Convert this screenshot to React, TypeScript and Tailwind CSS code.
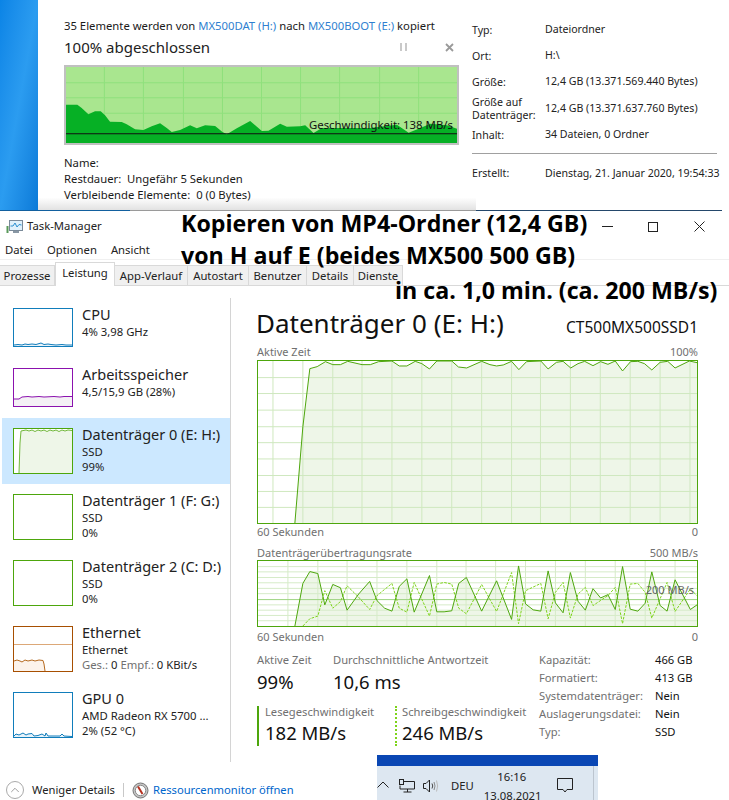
import { ChevronUp } from "lucide-react";

type Pt = [number, number];

const pts = (list: Pt[]) => list.map((p) => p.join(",")).join(" ");

// Points below are read off the screenshot at 3x, so the viewBoxes are in 3x units too
const ACTIVE_LINE: Pt[] = [
  [148, 670], [172, 380], [193, 205], [215, 199], [240, 184], [262, 193], [285, 193], [307, 183], [350, 193], [375, 193],
  [400, 184], [440, 182], [462, 197], [485, 197], [510, 183], [530, 190], [553, 206], [575, 182], [620, 182], [640, 200],
  [665, 203], [710, 183], [735, 193], [755, 197], [775, 194], [800, 183], [822, 208], [845, 184], [888, 182], [910, 206],
  [935, 186], [955, 183], [978, 203], [1000, 190], [1020, 183], [1045, 196], [1068, 184], [1090, 192], [1112, 182], [1134, 212],
  [1158, 184], [1180, 183], [1200, 190], [1222, 209], [1247, 186], [1270, 183], [1292, 203], [1335, 182], [1358, 187],
];

const READ_LINE: Pt[] = [
  [148, 262], [172, 133], [193, 97], [217, 103], [238, 198], [262, 136], [285, 146], [305, 214], [340, 165], [373, 127],
  [395, 185], [418, 208], [440, 217], [462, 142], [485, 119], [507, 220], [553, 109], [575, 219], [597, 219], [620, 216],
  [641, 133], [664, 115], [710, 217], [755, 125], [800, 242], [821, 80], [842, 195], [865, 213], [888, 217], [910, 95],
  [932, 192], [955, 222], [977, 100], [1000, 187], [1022, 214], [1045, 149], [1068, 177], [1090, 167], [1112, 212], [1134, 82],
  [1157, 211], [1180, 217], [1202, 193], [1222, 98], [1247, 200], [1268, 217], [1292, 122], [1338, 212], [1358, 198],
];

const WRITE_LINE: Pt[] = [
  [172, 262], [193, 240], [217, 232], [238, 155], [262, 208], [285, 188], [305, 140], [340, 175], [373, 212], [395, 170],
  [440, 133], [462, 208], [485, 220], [507, 130], [553, 232], [575, 135], [597, 130], [620, 135], [641, 208], [664, 225],
  [710, 136], [755, 218], [800, 100], [821, 255], [842, 155], [888, 133], [910, 240], [932, 160], [955, 130], [977, 238],
  [1000, 165], [1022, 145], [1045, 200], [1090, 170], [1112, 145], [1134, 255], [1157, 135], [1180, 133], [1202, 160], [1222, 238],
  [1268, 130], [1292, 218], [1338, 150], [1358, 170],
];

const COPY_AREA: Pt[] = [
  [18, 133], [52, 133], [65, 143], [85, 162], [105, 153], [122, 153], [135, 165], [150, 184], [185, 185], [200, 192],
  [225, 207], [250, 209], [275, 198], [300, 189], [320, 203], [335, 215], [360, 209], [390, 195], [410, 204], [435, 195],
  [465, 197], [487, 215], [500, 222], [530, 204], [570, 182], [605, 212], [625, 211], [660, 190], [680, 199], [720, 198],
  [735, 195], [760, 218], [785, 203], [850, 203], [930, 203], [1010, 193], [1045, 217], [1075, 205], [1110, 190], [1160, 195],
  [1190, 205], [1190, 248], [18, 248],
];

function CopyChart() {
  return (
    <div className="relative w-[395px] h-[80px] border-2 border-[#c0c0c0] bg-[#a9e68f]">
      <svg viewBox="18 20 1172 228" preserveAspectRatio="none" className="block w-full h-full">
        {[133, 250, 370, 487, 604, 721, 838, 958, 1075].map((x) => (
          <line key={x} x1={x} x2={x} y1={20} y2={248} stroke="#8fe07c" strokeWidth={3} />
        ))}
        {[67, 112, 159].map((y) => (
          <line key={y} x1={18} x2={1190} y1={y} y2={y} stroke="#8fe07c" strokeWidth={3} />
        ))}
        <polygon points={pts(COPY_AREA)} fill="#06b025" />
        <line x1={18} x2={1190} y1={220} y2={220} stroke="#101010" strokeWidth={3} />
      </svg>
      <span className="absolute right-[4px] top-[50px] text-[11.4px] leading-[16px] text-[#111] whitespace-nowrap">
        Geschwindigkeit: 138 MB/s
      </span>
    </div>
  );
}

function CopyDialog() {
  return (
    <div className="w-[438px] h-[210px] pl-[26px] pt-[17px] bg-gradient-to-b from-white from-[94%] to-[#e2e2e2] text-[11.3px] text-[#1a1a1a]">
      <p className="leading-[18px] whitespace-nowrap">
        35 Elemente werden von <span className="text-[#2f7fd0]">MX500DAT (H:)</span> nach{" "}
        <span className="text-[#2f7fd0]">MX500BOOT (E:)</span> kopiert
      </p>
      <div className="flex items-center justify-between w-[393px] h-[24px] mb-[6px]">
        <span className="text-[15px] text-[#222]">100% abgeschlossen</span>
        <div className="flex items-center gap-[38px] pr-[3px]">
          <div className="flex gap-[3px]">
            <span className="w-[2px] h-[8px] bg-[#c9c9c9]" />
            <span className="w-[2px] h-[8px] bg-[#c9c9c9]" />
          </div>
          <svg width="9" height="9" viewBox="0 0 9 9">
            <path d="M1 1 L8 8 M8 1 L1 8" stroke="#9a9a9a" strokeWidth="1.8" />
          </svg>
        </div>
      </div>
      <CopyChart />
      <div className="mt-[10px] leading-[16px]">
        <p>Name:</p>
        <p>Restdauer:&nbsp; Ungefähr 5 Sekunden</p>
        <p>Verbleibende Elemente:&nbsp; 0 (0 Bytes)</p>
      </div>
    </div>
  );
}

const PROPS: { label: string[]; value: string; h: string }[] = [
  { label: ["Typ:"], value: "Dateiordner", h: "h-[26px]" },
  { label: ["Ort:"], value: "H:\\", h: "h-[26px]" },
  { label: ["Größe:"], value: "12,4 GB (13.371.569.440 Bytes)", h: "h-[26px]" },
  { label: ["Größe auf", "Datenträger:"], value: "12,4 GB (13.371.637.760 Bytes)", h: "h-[27px]" },
  { label: ["Inhalt:"], value: "34 Dateien, 0 Ordner", h: "h-[26px]" },
];

function PropertiesPanel() {
  return (
    <div className="flex-1 pt-[17px] text-[10.6px] text-[#222]">
      <div className="ml-[-4px] w-[245px]">
        {PROPS.map((p) => (
          <div key={p.value} className={`flex items-center ${p.h}`}>
            <span className="w-[73px] shrink-0 leading-[13px]">
              {p.label.map((l) => (
                <span key={l} className="block">{l}</span>
              ))}
            </span>
            <span className="whitespace-nowrap">{p.value}</span>
          </div>
        ))}
        <div className="h-[1px] bg-[#a0a0a0] mt-[5px]" />
        <div className="flex items-center h-[39px]">
          <span className="w-[73px] shrink-0">Erstellt:</span>
          <span className="whitespace-nowrap">Dienstag, 21. Januar 2020, 19:54:33</span>
        </div>
      </div>
    </div>
  );
}

function TaskIcon() {
  return (
    <svg width="17" height="14" viewBox="0 0 17 14">
      <rect x="0.5" y="6" width="2" height="7" fill="#5a9a5a" />
      <rect x="3.5" y="0.5" width="13" height="10" fill="#dff0fb" stroke="#7a8a99" />
      <path d="M4.5 6 L7 6 L9 3 L11 7 L13 4.5 L15.5 5" fill="none" stroke="#2a8fd0" strokeWidth="1" />
      <rect x="7" y="11" width="6" height="2" fill="#8a98a5" />
    </svg>
  );
}

function TitleBar() {
  return (
    <div className="flex items-center h-[31px] pl-[6px]">
      <TaskIcon />
      <span className="ml-[4px] text-[11.3px] text-[#222]">Task-Manager</span>
      <div className="ml-auto flex items-center pr-[24px]">
        <span className="w-[11px] h-[1px] bg-[#222]" />
        <span className="ml-[35px] w-[10px] h-[10px] border border-[#222]" />
        <svg width="11" height="11" viewBox="0 0 11 11" className="ml-[36px]">
          <path d="M0.5 0.5 L10.5 10.5 M10.5 0.5 L0.5 10.5" stroke="#222" strokeWidth="1" />
        </svg>
      </div>
    </div>
  );
}

const TABS = [
  { name: "Prozesse", w: "w-[56px]" },
  { name: "Leistung", w: "w-[60px]", active: true },
  { name: "App-Verlauf", w: "w-[74px]" },
  { name: "Autostart", w: "w-[62px]" },
  { name: "Benutzer", w: "w-[59px]" },
  { name: "Details", w: "w-[48px]" },
  { name: "Dienste", w: "w-[50px]" },
];

function Tabs() {
  return (
    <div className="flex items-end h-[24px] border-b border-[#d9d9d9] text-[11.3px] text-[#222]">
      {TABS.map((t) =>
        t.active ? (
          <div key={t.name} className={`${t.w} h-[24px] mb-[-1px] bg-white border border-b-0 border-[#d9d9d9] text-center leading-[20px]`}>
            {t.name}
          </div>
        ) : (
          <div key={t.name} className={`${t.w} h-[20px] bg-[#f0f0f0] border-l border-t border-r border-[#d9d9d9] text-center leading-[20px] ml-[-1px]`}>
            {t.name}
          </div>
        )
      )}
    </div>
  );
}

function Thumb({ color, h, children }: { color: string; h: string; children?: React.ReactNode }) {
  return (
    <div className={`w-[60px] ${h} border shrink-0 bg-white`} style={{ borderColor: color }}>
      {children}
    </div>
  );
}

type SidebarItem = {
  title: string;
  lines: string[];
  color: string;
  rowH: string;
  boxH: string;
  active?: boolean;
  ethernet?: boolean;
  line?: string;
  close?: string;
  stroke?: string;
  fill?: string;
  vb?: string;
};

const SIDEBAR: SidebarItem[] = [
  {
    title: "CPU", lines: ["4%  3,98 GHz"], color: "#117dbb", rowH: "h-[60px]", boxH: "h-[39px]", vb: "0 0 58 37",
    line: "0,36 4,35.5 8,36 11,35 14,35.5 18,35 22,35.5 27,34 30,35.5 34,35 37,35.5 42,36 48,35.5 52,36 58,36", close: "58,37 0,37",
    stroke: "#117dbb", fill: "#e8f3fa",
  },
  {
    title: "Arbeitsspeicher", lines: ["4,5/15,9 GB (28%)"], color: "#8b12ae", rowH: "h-[60px]", boxH: "h-[39px]", vb: "0 0 58 37",
    line: "0,30 5,30 8,28 14,27.5 18,28 25,27.5 30,28 40,27.5 46,28 50,27.5 58,27.5", close: "58,37 0,37",
    stroke: "#8b12ae", fill: "#f4f0f5",
  },
  {
    title: "Datenträger 0 (E: H:)", lines: ["SSD", "99%"], color: "#4da60c", rowH: "h-[66px]", boxH: "h-[46px]", active: true, vb: "0 0 58 44",
    line: "5,44 6,14 7,2 12,1 15,2 18,1 21,2.5 24,1 27,2 30,1 33,2.5 36,1 39,2 42,1 45,2.5 48,1 51,2 54,1 58,1.5", close: "58,44",
    stroke: "#72b83c", fill: "#eef6e8",
  },
  { title: "Datenträger 1 (F: G:)", lines: ["SSD", "0%"], color: "#4da60c", rowH: "h-[66px]", boxH: "h-[46px]" },
  { title: "Datenträger 2 (C: D:)", lines: ["SSD", "0%"], color: "#4da60c", rowH: "h-[66px]", boxH: "h-[46px]" },
  {
    title: "Ethernet", lines: ["Ethernet"], color: "#a74f01", rowH: "h-[66px]", boxH: "h-[46px]", ethernet: true, vb: "0 0 58 44",
    line: "0,34 3,33 6,34 8,35 11,33 14,34 18,33 21,34 25,33 29,33.5 30,37 31,44", close: "0,44",
    stroke: "#b56a20", fill: "#fcf3eb",
  },
  {
    title: "GPU 0", lines: ["AMD Radeon RX 5700 ...", "2%  (52 °C)"], color: "#117dbb", rowH: "h-[66px]", boxH: "h-[46px]", vb: "0 0 58 44",
    line: "0,43 2,41 5,42 9,40 12,42 14,41 18,40.5 20,43 24,42.5 28,41 31,43 32,40 34,43 46,43 48,41 50,43 58,43.5", close: "58,44 0,44",
    stroke: "#117dbb", fill: "#e8f3fa",
  },
];

function Sidebar() {
  return (
    <div className="w-[231px] shrink-0 pt-[12px]">
      <div className="border-r border-[#d4d4d4] w-[231px] mt-[10px]">
        <div className="mt-[-10px]">
          {SIDEBAR.map((s) => (
            <div
              key={s.title}
              className={`flex ml-[2px] pl-[11px] pt-[10px] ${s.rowH} ${s.active ? "bg-[#cce8ff]" : ""}`}
            >
              <Thumb color={s.color} h={s.boxH}>
                {s.line && (
                  <svg viewBox={s.vb} preserveAspectRatio="none" className="block w-full h-full">
                    <polygon points={`${s.line} ${s.close}`} fill={s.fill} />
                    <polyline points={s.line} fill="none" stroke={s.stroke} strokeWidth="1" />
                    {s.ethernet && <line x1="0" x2="58" y1="17.5" y2="17.5" stroke="#dca878" strokeWidth="1" />}
                  </svg>
                )}
              </Thumb>
              <div className="ml-[9px] mt-[-4px] text-[11.3px] leading-[15px] text-[#222] whitespace-nowrap">
                <div className="text-[14.5px] leading-[20px] text-[#222]">{s.title}</div>
                {s.lines.map((l) => (
                  <div key={l}>{l}</div>
                ))}
                {s.ethernet && (
                  <div>
                    <span className="text-[#707070]">Ges.:</span> 0 <span className="text-[#707070]">Empf.:</span> 0 KBit/s
                  </div>
                )}
              </div>
            </div>
          ))}
        </div>
        <div className="h-[14px]" />
      </div>
    </div>
  );
}

function ActiveChart() {
  const verticals = [82, 172, 262, 350, 440, 530, 620, 710, 800, 887, 977, 1067, 1157, 1247, 1337];
  const horizontals = [232, 280, 330, 380, 428, 477, 527, 575, 623];
  return (
    <svg viewBox="37 182 1321 488" preserveAspectRatio="none" className="block w-[441px] h-[164px] border border-[#4da60c]">
      <polygon points={`${pts(ACTIVE_LINE)} 1358,670`} fill="#eef6e8" />
      {verticals.map((x) => (
        <line key={x} x1={x} x2={x} y1={182} y2={670} stroke="#cfe8bf" strokeWidth={3} />
      ))}
      {horizontals.map((y) => (
        <line key={y} x1={37} x2={1358} y1={y} y2={y} stroke="#cfe8bf" strokeWidth={3} />
      ))}
      <polyline points={pts(ACTIVE_LINE)} fill="none" stroke="#4da60c" strokeWidth={3} />
    </svg>
  );
}

function RateChart() {
  const verticals = [127, 217, 305, 395, 485, 575, 663, 752, 842, 932, 1022, 1112, 1202, 1292];
  const horizontals = [82, 98, 115, 131, 148, 164, 198, 214, 230, 246];
  return (
    <div className="relative w-[441px] h-[67px]">
      <svg viewBox="37 65 1321 197" preserveAspectRatio="none" className="block w-full h-full border border-[#4da60c]">
        <polygon points={`${pts(READ_LINE)} 1358,262`} fill="#eef6e8" />
        {verticals.map((x) => (
          <line key={x} x1={x} x2={x} y1={65} y2={262} stroke="#d6ebc8" strokeWidth={3} />
        ))}
        {horizontals.map((y) => (
          <line key={y} x1={37} x2={1358} y1={y} y2={y} stroke="#d6ebc8" strokeWidth={3} />
        ))}
        <line x1={37} x2={1358} y1={182} y2={182} stroke="#9bd37f" strokeWidth={3} />
        <polyline points={pts(WRITE_LINE)} fill="none" stroke="#7dd31a" strokeWidth={3} strokeDasharray="8 4" />
        <polyline points={pts(READ_LINE)} fill="none" stroke="#4da60c" strokeWidth={3} />
      </svg>
      <span className="absolute right-[4px] top-[23px] text-[11px] leading-[14px] text-[#666]">200 MB/s</span>
    </div>
  );
}

const FACTS = [
  ["Kapazität:", "466 GB"],
  ["Formatiert:", "413 GB"],
  ["Systemdatenträger:", "Nein"],
  ["Auslagerungsdatei:", "Nein"],
  ["Typ:", "SSD"],
];

function ChartLabels({ left, right }: { left: string; right: string }) {
  return (
    <div className="flex justify-between h-[15px] leading-[15px] text-[11px] text-[#707070]">
      <span>{left}</span>
      <span>{right}</span>
    </div>
  );
}

function DetailPanel() {
  return (
    <div className="w-[441px] ml-[26px] text-[#707070]">
      <div className="flex items-baseline justify-between h-[58px] pt-[20px]">
        <span className="text-[26px] leading-[34px] text-[#111] ml-[-1px] whitespace-nowrap">Datenträger 0 (E: H:)</span>
        <span className="text-[15.5px] text-[#111]">CT500MX500SSD1</span>
      </div>
      <ChartLabels left="Aktive Zeit" right="100%" />
      <div className="h-[1px]" />
      <ActiveChart />
      <ChartLabels left="60 Sekunden" right="0" />
      <div className="h-[6px]" />
      <ChartLabels left="Datenträgerübertragungsrate" right="500 MB/s" />
      <RateChart />
      <div className="h-[2px]" />
      <ChartLabels left="60 Sekunden" right="0" />
      <div className="flex mt-[8px]">
        <div className="w-[282px]">
          <div className="flex">
            <div className="w-[76px]">
              <div className="text-[11.2px] leading-[16px]">Aktive Zeit</div>
              <div className="text-[18.5px] leading-[28px] text-[#111]">99%</div>
            </div>
            <div>
              <div className="text-[11.2px] leading-[16px]">Durchschnittliche Antwortzeit</div>
              <div className="text-[18.5px] leading-[28px] text-[#111]">10,6 ms</div>
            </div>
          </div>
          <div className="flex mt-[10px]">
            <div className="w-[138px] h-[40px] border-l-2 border-[#4da60c] pl-[6px]">
              <div className="text-[11.2px] leading-[11px]">Lesegeschwindigkeit</div>
              <div className="text-[18.5px] leading-[28px] mt-[2px] text-[#111]">182 MB/s</div>
            </div>
            <div className="h-[40px] border-l-2 border-dotted border-[#7dd31a] pl-[5px]">
              <div className="text-[11.2px] leading-[11px] whitespace-nowrap">Schreibgeschwindigkeit</div>
              <div className="text-[18.5px] leading-[28px] mt-[2px] text-[#111]">246 MB/s</div>
            </div>
          </div>
        </div>
        <div className="text-[11.2px] leading-[18px] mt-[-1px]">
          {FACTS.map(([k, v]) => (
            <div key={k} className="flex whitespace-nowrap">
              <span className="w-[116px]">{k}</span>
              <span className="text-[#111]">{v}</span>
            </div>
          ))}
        </div>
      </div>
    </div>
  );
}

function Footer() {
  return (
    <div className="flex items-center h-[36px] mt-[10px] pl-[6px] text-[11.2px] text-[#222]">
      <span className="flex items-center justify-center w-[18px] h-[18px] rounded-full border border-[#aaa]">
        <ChevronUp size={14} strokeWidth={1.2} className="text-[#777]" />
      </span>
      <span className="ml-[8px]">Weniger Details</span>
      <span className="ml-[8px] w-[1px] h-[14px] bg-[#c8c8c8]" />
      <svg width="17" height="17" viewBox="0 0 17 17" className="ml-[8px]">
        <circle cx="8.5" cy="8.5" r="7.5" fill="#c4c4c4" stroke="#777" strokeWidth="1" />
        <circle cx="8.5" cy="8.5" r="5.2" fill="#fff" stroke="#666" strokeWidth="0.7" />
        <path d="M6 4.5 L10.5 12" stroke="#b5301f" strokeWidth="2" />
      </svg>
      <span className="ml-[4px] text-[#0066cc]">Ressourcenmonitor öffnen</span>
    </div>
  );
}

function Taskbar() {
  return (
    <div className="absolute left-[377px] top-[755px] w-[221px] h-[45px] bg-[#dde7f1] overflow-hidden text-[#222]">
      <div className="h-[11px] bg-[#0a47b4]" />
      <div className="flex items-start h-[34px] border-r border-[#bcc5cf] mr-[4px]">
        <svg width="12" height="7" viewBox="0 0 12 7" className="mt-[15px]">
          <path d="M0.5 6.5 L6 1 L11.5 6.5" fill="none" stroke="#222" strokeWidth="1" />
        </svg>
        <svg width="16" height="14" viewBox="0 0 16 14" className="ml-[10px] mt-[13px]">
          <path d="M5 2.5 H15.5 V10 H1 V6.5 M8.5 10 V13 M4.5 13 H12.5" fill="none" stroke="#222" strokeWidth="1" />
          <rect x="0.5" y="0.5" width="4" height="5" fill="none" stroke="#222" />
        </svg>
        <svg width="16" height="14" viewBox="0 0 16 14" className="ml-[8px] mt-[13px]">
          <path d="M0.5 4.5 H3 L6.5 1 V13 L3 9.5 H0.5 Z" fill="none" stroke="#222" strokeWidth="1" />
          <path d="M9 4.5 Q10.5 7 9 9.5" fill="none" stroke="#444" />
          <path d="M11 3 Q13 7 11 11" fill="none" stroke="#888" />
          <path d="M13.5 1.5 Q15.8 7 13.5 12.5" fill="none" stroke="#bbb" />
        </svg>
        <span className="ml-[12px] mt-[11px] text-[11.3px] leading-[18px]">DEU</span>
        <div className="ml-[10px] w-[56px] text-center text-[11.3px] leading-[19px] pt-[1px] whitespace-nowrap">
          <div>16:16</div>
          <div>13.08.2021</div>
        </div>
        <svg width="16" height="15" viewBox="0 0 16 15" className="ml-[17px] mt-[12px]">
          <path d="M0.5 0.5 H15.5 V11.5 H10 L8 14 L6 11.5 H0.5 Z" fill="none" stroke="#222" strokeWidth="1" />
        </svg>
      </div>
    </div>
  );
}

function Annotations() {
  const cls = "absolute whitespace-nowrap font-['Open_Sans',sans-serif] font-bold text-[23.2px] leading-[28px] text-black";
  return (
    <>
      <span className={`${cls} left-[181px] top-[209px]`}>Kopieren von MP4-Ordner (12,4 GB)</span>
      <span className={`${cls} left-[181px] top-[241px]`}>von H auf E (beides MX500 500 GB)</span>
      <span className={`${cls} left-[395px] top-[276px]`}>in ca. 1,0 min. (ca. 200 MB/s)</span>
    </>
  );
}

export default function App() {
  return (
    <div className="relative w-[729px] h-[800px] overflow-hidden bg-white font-['Noto_Sans',sans-serif]">
      <div className="flex h-[210px]">
        <div className="w-[38px] shrink-0 bg-gradient-to-br from-[#0a84e6] via-[#2b9cf0] to-[#0a7ad8]" />
        <CopyDialog />
        <PropertiesPanel />
      </div>
      <div className="flex h-[1px]">
        <div className="w-[130px] bg-[#12609f]" />
        <div className="w-[346px] bg-[#9a9a9a]" />
        <div className="w-[246px] bg-[#24476b]" />
      </div>
      <TitleBar />
      <div className="h-[18px] flex items-center gap-[14px] pl-[5px] border-b border-[#f0f0f0] text-[11.3px] text-[#222]">
        <span>Datei</span>
        <span>Optionen</span>
        <span>Ansicht</span>
      </div>
      <div className="h-[2px]" />
      <Tabs />
      <div className="flex">
        <Sidebar />
        <DetailPanel />
      </div>
      <Footer />
      <Taskbar />
      <Annotations />
    </div>
  );
}
